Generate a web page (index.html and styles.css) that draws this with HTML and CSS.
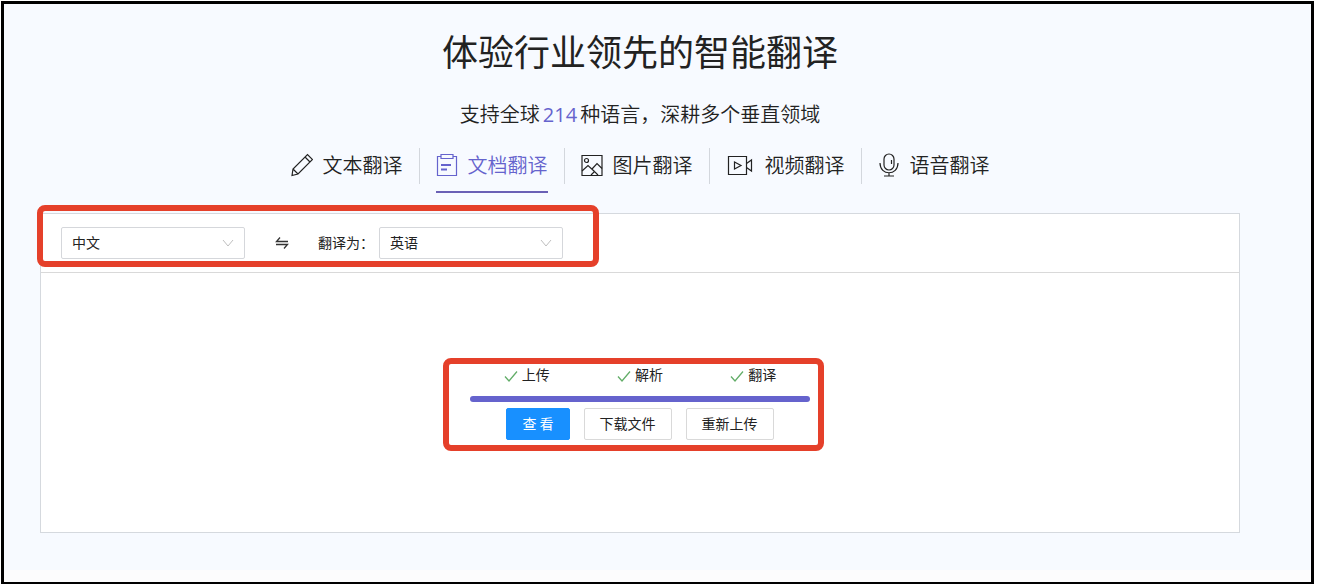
FILE: index.html
```html
<!DOCTYPE html>
<html lang="zh-CN">
<head>
<meta charset="utf-8">
<title>文档翻译</title>
<link rel="stylesheet" href="styles.css">
</head>
<body>
<div class="frame">
  <main class="page">
    <h1 class="title">体验行业领先的智能翻译</h1>
    <p class="subtitle">支持全球<span class="count">214</span>种语言，深耕多个垂直领域</p>
    <nav class="tabs">
      <a class="tab" href="#text">
        <span class="tab-body">
          <svg class="icon" width="22" height="24" viewBox="0 0 22 24"><path d="M1 22.500 2 16 16.500 1.500 21.500 6.500 7 21ZM2 16 7 21M14 4 19 9"/></svg>
          文本翻译
        </span>
      </a>
      <a class="tab active" href="#document">
        <span class="tab-body">
          <svg class="icon" width="22" height="24" viewBox="0 0 22 24"><path d="M5 3.500H1.500V22.500H20.500V3.500H17"/><path d="M5 1.500H17V5.500H5Z"/><path class="thick" d="M5 12H15M5 16.500H11"/></svg>
          文档翻译
        </span>
      </a>
      <a class="tab" href="#image">
        <span class="tab-body">
          <svg class="icon" width="22" height="24" viewBox="0 0 22 24"><path d="M1 2.500H21V22.500H1Z"/><circle cx="5.500" cy="7.500" r="2"/><path d="M1 18 7 12.500 13.500 18.500M11 16 16 10.500 21 15.500M10 22 13.500 18.500 17 22"/></svg>
          图片翻译
        </span>
      </a>
      <a class="tab" href="#video">
        <span class="tab-body">
          <svg class="icon" width="29" height="24" viewBox="0 0 29 24"><path d="M2.500 3.500H20.500V21.500H2.500Z"/><path d="M8.500 9V16L15 12.500Z"/><path d="M20.500 10.500 25.500 7V18L20.500 14.500"/></svg>
          视频翻译
        </span>
      </a>
      <a class="tab" href="#voice">
        <span class="tab-body">
          <svg class="icon" width="22" height="24" viewBox="0 0 22 24"><rect x="6" y="1" width="10" height="16" rx="5"/><path d="M2 10C2 23 20 23 20 10M11 20V23M6 23H16M13.500 7V11"/></svg>
          语音翻译
        </span>
      </a>
    </nav>

    <section class="panel">
      <div class="toolbar">
        <span class="select-wrap">
          <select class="select" aria-label="源语言"><option>中文</option></select>
          <svg class="arrow" width="12" height="8" viewBox="0 0 12 8"><path d="M1 1 6 7 11 1"/></svg>
        </span>
        <button class="swap" type="button" aria-label="交换语言">
          <svg width="14" height="12" viewBox="0 0 14 12"><path d="M5 0.500 1.500 4.500H13M1 7.500H12.500L9 11.500"/></svg>
        </button>
        <label class="to-label" for="target">翻译为：</label>
        <span class="select-wrap">
          <select class="select" id="target"><option>英语</option></select>
          <svg class="arrow" width="12" height="8" viewBox="0 0 12 8"><path d="M1 1 6 7 11 1"/></svg>
        </span>
        <span class="mark mark-languages"></span>
      </div>
      <div class="content">
        <div class="task">
          <ul class="steps">
            <li class="step"><svg width="14" height="12" viewBox="0 0 14 12"><path d="M1 6.500 5 11 13 1.500"/></svg>上传</li>
            <li class="step"><svg width="14" height="12" viewBox="0 0 14 12"><path d="M1 6.500 5 11 13 1.500"/></svg>解析</li>
            <li class="step"><svg width="14" height="12" viewBox="0 0 14 12"><path d="M1 6.500 5 11 13 1.500"/></svg>翻译</li>
          </ul>
          <div class="progress"></div>
          <div class="actions">
            <button class="btn primary" type="button">查 看</button>
            <button class="btn" type="button">下载文件</button>
            <button class="btn" type="button">重新上传</button>
          </div>
          <span class="mark mark-task"></span>
        </div>
      </div>
    </section>
  </main>
  <div class="below"></div>
</div>
</body>
</html>
```
FILE: styles.css
```css
* { box-sizing: border-box; }

body {
  margin: 0;
  background: #fff;
  color: #222;
  font-family: "Noto Sans CJK SC", sans-serif;
  font-size: 14px;
}

.frame {
  display: flex;
  flex-direction: column;
  min-height: calc(100vh - 1px);
  margin: 1px 5px 0 1px;
  border: 3px solid #000;
  border-bottom-width: 2px;
  background: #f7faff;
}

.page {
  flex: 1;
  padding: 20px 71px 36px 36px;
}

.title {
  margin: 0;
  font-size: 36px;
  font-weight: 400;
  line-height: 52px;
  text-align: center;
}

.subtitle {
  margin: 22px 0 0;
  font-size: 20px;
  font-weight: 350;
  line-height: 32px;
  text-align: center;
}

.count {
  margin: 0 3px;
  color: #6563cd;
  font-family: "Open Sans", "Noto Sans CJK SC", sans-serif;
  font-weight: 400;
}

.tabs {
  display: flex;
  justify-content: center;
  margin-top: 17px;
}

.tab {
  position: relative;
  padding: 0 16px 2px;
  color: #222;
  font-size: 20px;
  font-weight: 350;
  line-height: 34px;
  text-decoration: none;
}

.tab + .tab { border-left: 1px solid #d3d7dd; }

.tab-body {
  display: flex;
  align-items: center;
  gap: 10px;
}

.tab.active { color: #6563cd; }

.tab.active::after {
  content: "";
  position: absolute;
  right: 16px;
  bottom: -9px;
  left: 16px;
  height: 2px;
  background: #6a60b5;
}

svg {
  flex: none;
  fill: none;
  stroke: currentColor;
}

.icon { stroke-width: 1.2; }
.thick { stroke-width: 2; }

.panel {
  margin-top: 29px;
  border: 1px solid #d5d9de;
  background: #fff;
}

.toolbar {
  position: relative;
  display: flex;
  align-items: center;
  padding: 13px 20px;
  border-bottom: 1px solid #d9d9d9;
}

.select-wrap {
  position: relative;
  width: 184px;
}

.select {
  display: block;
  width: 100%;
  height: 32px;
  padding: 0 10px 2px;
  border: 1px solid #d5d7db;
  border-radius: 2px;
  background: #fff;
  color: #222;
  font: inherit;
  appearance: none;
}

.arrow {
  position: absolute;
  top: 12px;
  right: 11px;
  color: #bfbfbf;
  pointer-events: none;
}

.swap {
  display: flex;
  margin: 0 29px 0 30px;
  padding: 0;
  border: 0;
  background: none;
  color: #333;
  stroke-width: 1.3;
}

.to-label {
  width: 61px;
  padding-bottom: 2px;
  white-space: nowrap;
}

.mark {
  position: absolute;
  border: 6px solid #e5402a;
  border-radius: 8px;
  pointer-events: none;
}

.mark-languages {
  top: -9px;
  left: -4px;
  width: 562px;
  height: 62px;
}

.content {
  display: flex;
  justify-content: center;
  padding: 90px 0 92px;
}

.task {
  position: relative;
  width: 340px;
}

.mark-task { inset: -5px -14px -11px -27px; }

.steps {
  display: grid;
  grid-template-columns: repeat(3, 1fr);
  margin: 0;
  padding: 0;
  list-style: none;
}

.step {
  display: flex;
  justify-content: center;
  align-items: center;
  gap: 4px;
  line-height: 22px;
}

.step svg { margin-top: 4px; color: #62ad68; stroke-width: 1.3; }

.progress {
  height: 6px;
  margin: 11px 0 6px;
  border-radius: 3px;
  background: #6563cd;
}

.actions {
  display: flex;
  justify-content: center;
  gap: 14px;
}

.btn {
  height: 32px;
  padding: 0 15px 2px;
  border: 1px solid #d9d9d9;
  border-radius: 2px;
  background: #fff;
  color: #222;
  font: inherit;
}

.primary {
  border-color: #1890ff;
  background: #1890ff;
  color: #fff;
}

.below {
  height: 12px;
  background: #fcfcfd;
}
```
